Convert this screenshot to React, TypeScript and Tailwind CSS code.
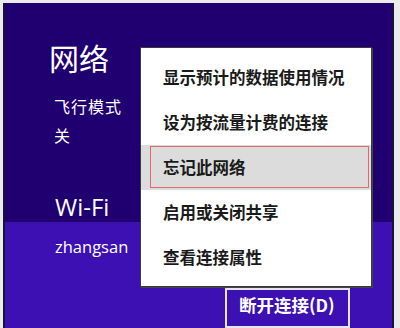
import React from "react";

const cjk = { fontFamily: '"Noto Sans CJK SC", "Noto Sans", sans-serif' };
const latin = { fontFamily: '"Open Sans", "Noto Sans", "Noto Sans CJK SC", sans-serif' };

const items = [
  "显示预计的数据使用情况",
  "设为按流量计费的连接",
  "忘记此网络",
  "启用或关闭共享",
  "查看连接属性",
];

export default function App() {
  return (
    <div className="w-[400px] h-[328px] bg-[#ebebeb] pl-[3px] pt-[3px] pr-[6px] overflow-hidden">
      <div className="relative h-full flex flex-col border-l-[2px] border-r-[2px] border-[#17123a] overflow-hidden">
        <div className="h-[230px] bg-[#200070] flex flex-col pl-[44px] text-white">
          <div className="mt-[34px] text-[30px] leading-[40px]" style={cjk}>网络</div>
          <div className="mt-[19px] ml-[5px] text-[16px] leading-[20px] tracking-[1px]" style={cjk}>飞行模式</div>
          <div className="mt-[9px] ml-[5px] text-[16px] leading-[20px]" style={cjk}>关</div>
          <div className="mt-[47px] ml-[6px] text-[24px] leading-[30px]" style={latin}>Wi-Fi</div>
        </div>
        <div className="flex-1 bg-[#3d10b3] flex flex-col text-white">
          <div className="mt-[14px] ml-[50px] text-[16.5px] leading-[22px]" style={latin}>zhangsan</div>
          <div className="mt-[30px] ml-[220px] w-[125px] h-[40px] border-[2px] border-[#e8e4f4] pl-[12px] pt-[5px] text-[17.5px] leading-[20px] font-bold" style={cjk}>
            断开连接(D)
          </div>
        </div>

        <div className="absolute left-[135px] top-[44px] w-[232px] h-[240px] bg-white border border-[#3a3a3a] pt-[7px] shadow-[1px_1px_0_#444]">
          {items.map((t, i) => (
            <div
              key={t}
              className={
                i === 2
                  ? "relative h-[45px] flex items-center pl-[22px] bg-[#dcdcdc]"
                  : "relative h-[45px] flex items-center pl-[22px]"
              }
            >
              <span className="text-[16.5px] font-bold text-[#1a1a1a]" style={cjk}>{t}</span>
              {i === 2 && (
                <div className="absolute left-[9px] right-[2px] top-[1px] bottom-[2px] border border-[#e06a6a]" />
              )}
            </div>
          ))}
        </div>
      </div>
    </div>
  );
}
